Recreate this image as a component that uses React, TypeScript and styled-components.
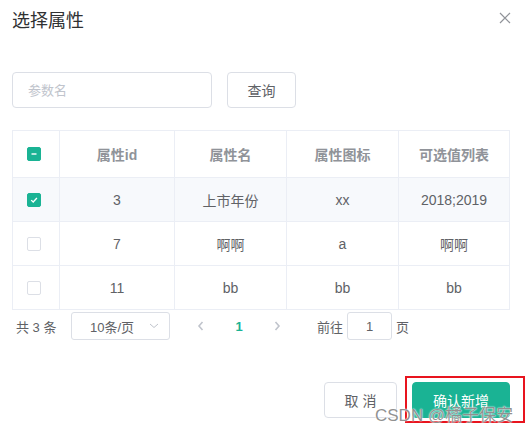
import React from 'react';
import styled, { createGlobalStyle, css } from 'styled-components';

const TEAL = '#1ab394';
const FONT = `"Liberation Sans", "Noto Sans CJK SC", sans-serif`;

const GlobalStyle = createGlobalStyle`
    html, body {
        margin: 0;
        padding: 0;
        background: #fff;
        font-family: ${FONT};
    }
`;

const Dialog = styled.div`
    position: relative;
    width: 528px;
    height: 431px;
    box-sizing: border-box;
    padding: 0 19px 0 12px;
    display: flex;
    flex-direction: column;
    overflow: hidden;
`;

const Header = styled.div`
    height: 40px;
    display: flex;
    align-items: center;
    justify-content: space-between;
    padding-top: 1px;
    box-sizing: border-box;
`;

const Title = styled.span`
    font-size: 18px;
    color: #303133;
    line-height: 24px;
`;

const CloseBtn = styled.button`
    border: none;
    background: none;
    padding: 0;
    width: 12px;
    height: 12px;
    margin-right: -2px;
    margin-top: -6px;
    display: flex;
    cursor: pointer;
`;

const SearchRow = styled.div`
    margin-top: 32px;
    display: flex;
    gap: 15px;
`;

const TextInput = styled.input`
    width: 200px;
    height: 36px;
    box-sizing: border-box;
    border: 1px solid #dcdfe6;
    border-radius: 4px;
    padding: 0 15px;
    font-family: ${FONT};
    font-size: 13px;
    color: #606266;
    outline: none;
    &::placeholder {
        color: #c0c4cc;
    }
`;

const Button = styled.button<{ $primary?: boolean; $width: number }>`
    width: ${p => p.$width}px;
    height: 36px;
    box-sizing: border-box;
    border-radius: 4px;
    font-family: ${FONT};
    font-size: 14px;
    padding: 0;
    cursor: pointer;
    ${p =>
        p.$primary
            ? css`
                  background: ${TEAL};
                  border: 1px solid ${TEAL};
                  color: #fff;
              `
            : css`
                  background: #fff;
                  border: 1px solid #dcdfe6;
                  color: #606266;
              `}
`;

const Table = styled.table`
    margin-top: 22px;
    width: 497px;
    border-collapse: collapse;
    table-layout: fixed;
    border: 1px solid #ebeef5;
    font-size: 14px;
`;

const Th = styled.th`
    height: 46px;
    border: 1px solid #ebeef5;
    color: #909399;
    font-weight: bold;
    text-align: center;
    padding: 0;
`;

const Row = styled.tr<{ $active?: boolean }>`
    background: ${p => (p.$active ? '#f7f9fc' : '#fff')};
`;

const Td = styled.td`
    height: 43px;
    border: 1px solid #ebeef5;
    color: #606266;
    text-align: center;
    padding: 0;
`;

const CheckCell = styled.div`
    display: flex;
    padding-left: 14px;
`;

const Box = styled.span<{ $on?: boolean }>`
    width: 14px;
    height: 14px;
    box-sizing: border-box;
    border-radius: 2px;
    display: inline-flex;
    align-items: center;
    justify-content: center;
    background: ${p => (p.$on ? TEAL : '#fff')};
    border: 1px solid ${p => (p.$on ? TEAL : '#dcdfe6')};
`;

const Pagination = styled.div`
    margin-top: 2px;
    height: 28px;
    display: flex;
    align-items: center;
    font-size: 13px;
    color: #606266;
`;

const Total = styled.span`
    margin-left: 4px;
    width: 55px;
`;

const SizeSelect = styled.div`
    width: 99px;
    height: 28px;
    box-sizing: border-box;
    border: 1px solid #dcdfe6;
    border-radius: 3px;
    display: flex;
    align-items: center;
    justify-content: space-between;
    padding: 0 9px 0 18px;
`;

const PagerItem = styled.span<{ $current?: boolean }>`
    width: 38px;
    display: flex;
    justify-content: center;
    font-weight: bold;
    color: ${p => (p.$current ? TEAL : '#c0c4cc')};
`;

const Jumper = styled.div`
    margin-left: 21px;
    display: flex;
    align-items: center;
`;

const JumpInput = styled.div`
    width: 45px;
    height: 28px;
    box-sizing: border-box;
    margin: 0 4px;
    border: 1px solid #dcdfe6;
    border-radius: 3px;
    display: flex;
    align-items: center;
    justify-content: center;
`;

const Footer = styled.div`
    margin-top: 42px;
    margin-right: -1px;
    display: flex;
    justify-content: flex-end;
    gap: 15px;
`;

const Marked = styled.div`
    position: relative;
    display: flex;
`;

const RedFrame = styled.div`
    position: absolute;
    left: -7px;
    top: -6px;
    width: 120px;
    height: 47px;
    box-sizing: border-box;
    border: 2px solid #e8141e;
    pointer-events: none;
`;

const Watermark = styled.div`
    position: absolute;
    left: 375px;
    top: 401px;
    font-size: 17px;
    color: rgba(125, 125, 125, 0.85);
    text-shadow: 0 0 2px #fff, 0 0 1px #fff;
    white-space: nowrap;
    pointer-events: none;
`;

const rows = [
    { id: '3', name: '上市年份', icon: 'xx', values: '2018;2019', checked: true },
    { id: '7', name: '啊啊', icon: 'a', values: '啊啊', checked: false },
    { id: '11', name: 'bb', icon: 'bb', values: 'bb', checked: false },
];

const Check = () => (
    <svg width="10" height="10" viewBox="0 0 10 10">
        <path d="M2.2 5.1 L4.2 7 L7.9 3" fill="none" stroke="#fff" strokeWidth="1.3" />
    </svg>
);

const Dash = () => (
    <svg width="10" height="10" viewBox="0 0 10 10">
        <path d="M2.5 5 H7.5" stroke="#fff" strokeWidth="1.4" />
    </svg>
);

const Chevron = ({ dir }: { dir: 'left' | 'right' | 'down' }) => {
    const d = dir === 'left' ? 'M6.5 2 L3 6 L6.5 10' : dir === 'right' ? 'M3.5 2 L7 6 L3.5 10' : 'M2 4 L6 7.5 L10 4';
    const size = dir === 'down' ? 12 : 10;
    return (
        <svg width={size} height="12" viewBox={`0 0 ${size} 12`}>
            <path d={d} fill="none" stroke="#c0c4cc" strokeWidth={dir === 'down' ? 1 : 1.6} />
        </svg>
    );
};

export default function App() {
    return (
        <>
            <GlobalStyle />
            <Dialog>
                <Header>
                    <Title>选择属性</Title>
                    <CloseBtn aria-label="close">
                        <svg width="12" height="12" viewBox="0 0 12 12">
                            <path d="M1 1 L11 11 M11 1 L1 11" stroke="#909399" strokeWidth="1.2" />
                        </svg>
                    </CloseBtn>
                </Header>

                <SearchRow>
                    <TextInput placeholder="参数名" />
                    <Button $width={69}>查询</Button>
                </SearchRow>

                <Table>
                    <colgroup>
                        <col style={{ width: 47 }} />
                        <col style={{ width: 115 }} />
                        <col style={{ width: 112 }} />
                        <col style={{ width: 112 }} />
                        <col style={{ width: 111 }} />
                    </colgroup>
                    <thead>
                        <tr>
                            <Th>
                                <CheckCell>
                                    <Box $on>
                                        <Dash />
                                    </Box>
                                </CheckCell>
                            </Th>
                            <Th>属性id</Th>
                            <Th>属性名</Th>
                            <Th>属性图标</Th>
                            <Th>可选值列表</Th>
                        </tr>
                    </thead>
                    <tbody>
                        {rows.map(r => (
                            <Row key={r.id} $active={r.checked}>
                                <Td>
                                    <CheckCell>
                                        <Box $on={r.checked}>{r.checked && <Check />}</Box>
                                    </CheckCell>
                                </Td>
                                <Td>{r.id}</Td>
                                <Td>{r.name}</Td>
                                <Td>{r.icon}</Td>
                                <Td>{r.values}</Td>
                            </Row>
                        ))}
                    </tbody>
                </Table>

                <Pagination>
                    <Total>共 3 条</Total>
                    <SizeSelect>
                        <span>10条/页</span>
                        <Chevron dir="down" />
                    </SizeSelect>
                    <PagerItem style={{ marginLeft: 12 }}>
                        <Chevron dir="left" />
                    </PagerItem>
                    <PagerItem $current>1</PagerItem>
                    <PagerItem>
                        <Chevron dir="right" />
                    </PagerItem>
                    <Jumper>
                        前往
                        <JumpInput>1</JumpInput>
                        页
                    </Jumper>
                </Pagination>

                <Footer>
                    <Button $width={73}>取 消</Button>
                    <Marked>
                        <Button $primary $width={98}>
                            确认新增
                        </Button>
                        <RedFrame />
                    </Marked>
                </Footer>

                <Watermark>CSDN @橘子保安</Watermark>
            </Dialog>
        </>
    );
}
